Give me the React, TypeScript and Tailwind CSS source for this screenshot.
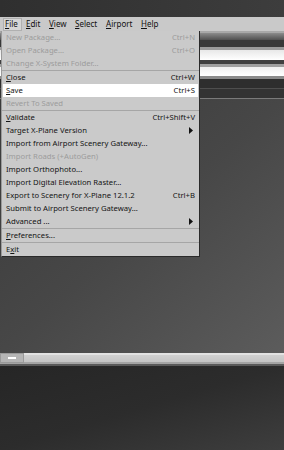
import React from 'react';

type Item =
  | { sep: true }
  | { label: React.ReactNode; shortcut?: string; disabled?: boolean; sub?: boolean; active?: boolean; sep?: false };

const u = (s: string) => <span className="underline underline-offset-[1px]">{s}</span>;

const items: Item[] = [
  { label: 'New Package...', shortcut: 'Ctrl+N', disabled: true },
  { label: 'Open Package...', shortcut: 'Ctrl+O', disabled: true },
  { label: 'Change X-System Folder...', disabled: true },
  { sep: true },
  { label: <>{u('C')}lose</>, shortcut: 'Ctrl+W' },
  { label: <>{u('S')}ave</>, shortcut: 'Ctrl+S', active: true },
  { label: 'Revert To Saved', disabled: true },
  { sep: true },
  { label: <>{u('V')}alidate</>, shortcut: 'Ctrl+Shift+V' },
  { label: 'Target X-Plane Version', sub: true },
  { label: 'Import from Airport Scenery Gateway...' },
  { label: 'Import Roads (+AutoGen)', disabled: true },
  { label: 'Import Orthophoto...' },
  { label: 'Import Digital Elevation Raster...' },
  { label: 'Export to Scenery for X-Plane 12.1.2', shortcut: 'Ctrl+B' },
  { label: 'Submit to Airport Scenery Gateway...' },
  { label: 'Advanced ...', sub: true },
  { sep: true },
  { label: <>{u('P')}references...</> },
  { sep: true },
  { label: <>E{u('x')}it</> },
];

function Arrow() {
  return (
    <svg width="4" height="7" viewBox="0 0 4 7" className="mr-[2px]">
      <path d="M0 0 L4 3.5 L0 7 Z" fill="#111" />
    </svg>
  );
}

export default function App() {
  return (
    <div
      className="relative w-[284px] h-[450px] overflow-hidden flex flex-col bg-[#3a3a3a] text-[7.7px] leading-none"
      style={{ fontFamily: '"Noto Sans", "Open Sans", sans-serif' }}
    >
      {/* title strip */}
      <div className="h-[17px] bg-gradient-to-r from-[#2f2f2f] to-[#3d3d3d]" />

      {/* menubar */}
      <div className="h-[14px] bg-[#c9c9c9] flex items-center text-[#111] text-[8px]">
        <div className="ml-[3px] w-[19px] h-[13px] pl-[1px] flex items-center bg-[#d6d6d6] border border-[#b0b0b0]">
          {u('F')}ile
        </div>
        <div className="ml-[4px] w-[23px]">{u('E')}dit</div>
        <div className="w-[26px]">{u('V')}iew</div>
        <div className="w-[31px]">{u('S')}elect</div>
        <div className="w-[35px]">{u('A')}irport</div>
        <div>{u('H')}elp</div>
      </div>

      {/* toolbars */}
      <div className="flex flex-col">
        <div className="h-[2px] bg-[#a8a8a8]" />
        <div className="h-[7px] bg-gradient-to-b from-[#8c8c8c] to-[#505050]" />
        <div className="h-[7px] bg-[#383838]" />
        <div className="h-[3px] bg-[#9a9a9a]" />
        <div className="h-[10px] bg-gradient-to-b from-[#e8e8e8] to-[#ffffff]" />
        <div className="h-[4px] bg-[#404040]" />
        <div className="h-[3px] bg-[#a0a0a0]" />
        <div className="h-[9px] bg-gradient-to-b from-[#f0f0f0] to-[#ffffff]" />
        <div className="h-[3px] bg-[#8a8a8a]" />
        <div className="h-[9px] bg-[#2e2e2e]" />
        <div className="h-px bg-[#4e4e4e]" />
        <div className="h-[9px] bg-[#333333]" />
        <div className="h-px bg-[#7a7a7a]" />
      </div>

      {/* canvas */}
      <div className="h-[254px] bg-gradient-to-br from-[#3a3a3a] via-[#474747] to-[#5c5c5c]" />

      {/* scrollbar */}
      <div className="h-[13px] flex flex-col">
        <div className="h-[2px] bg-[#e2e2e2]" />
        <div className="relative h-[7px] bg-gradient-to-b from-[#d0d0d0] to-[#c4c4c4]">
          <div className="absolute left-0 top-[-2px] w-[24px] h-[10px] bg-[#b5b5b5] border border-[#9a9a9a] flex items-center justify-center">
            <div className="w-[8px] h-[2px] bg-white" />
          </div>
        </div>
        <div className="h-[2px] bg-[#a4a4a4]" />
        <div className="h-[2px] bg-[#5a5a5a]" />
      </div>

      {/* bottom panel */}
      <div className="flex-1 bg-gradient-to-br from-[#262626] via-[#2c2c2c] to-[#3e3e3e]" />

      {/* File menu */}
      <div className="absolute left-[1px] top-[31px] w-[199px] bg-[#cacaca] border-r border-b border-[#2a2a2a] border-l border-l-[#9a9a9a]">
        {items.map((it, i) =>
          it.sep ? (
            <div key={i} className="h-px bg-[#a6a6a6]" />
          ) : (
            <div
              key={i}
              className={
                'h-[13px] mx-px flex items-center justify-between pl-[3px] pr-[3px] ' +
                (it.active ? 'bg-white ' : '') +
                (it.disabled ? 'text-[#9c9c9c]' : 'text-[#141414]')
              }
            >
              <span className="whitespace-nowrap">{it.label}</span>
              {it.shortcut && <span className="whitespace-nowrap">{it.shortcut}</span>}
              {it.sub && <Arrow />}
            </div>
          )
        )}
      </div>
    </div>
  );
}
